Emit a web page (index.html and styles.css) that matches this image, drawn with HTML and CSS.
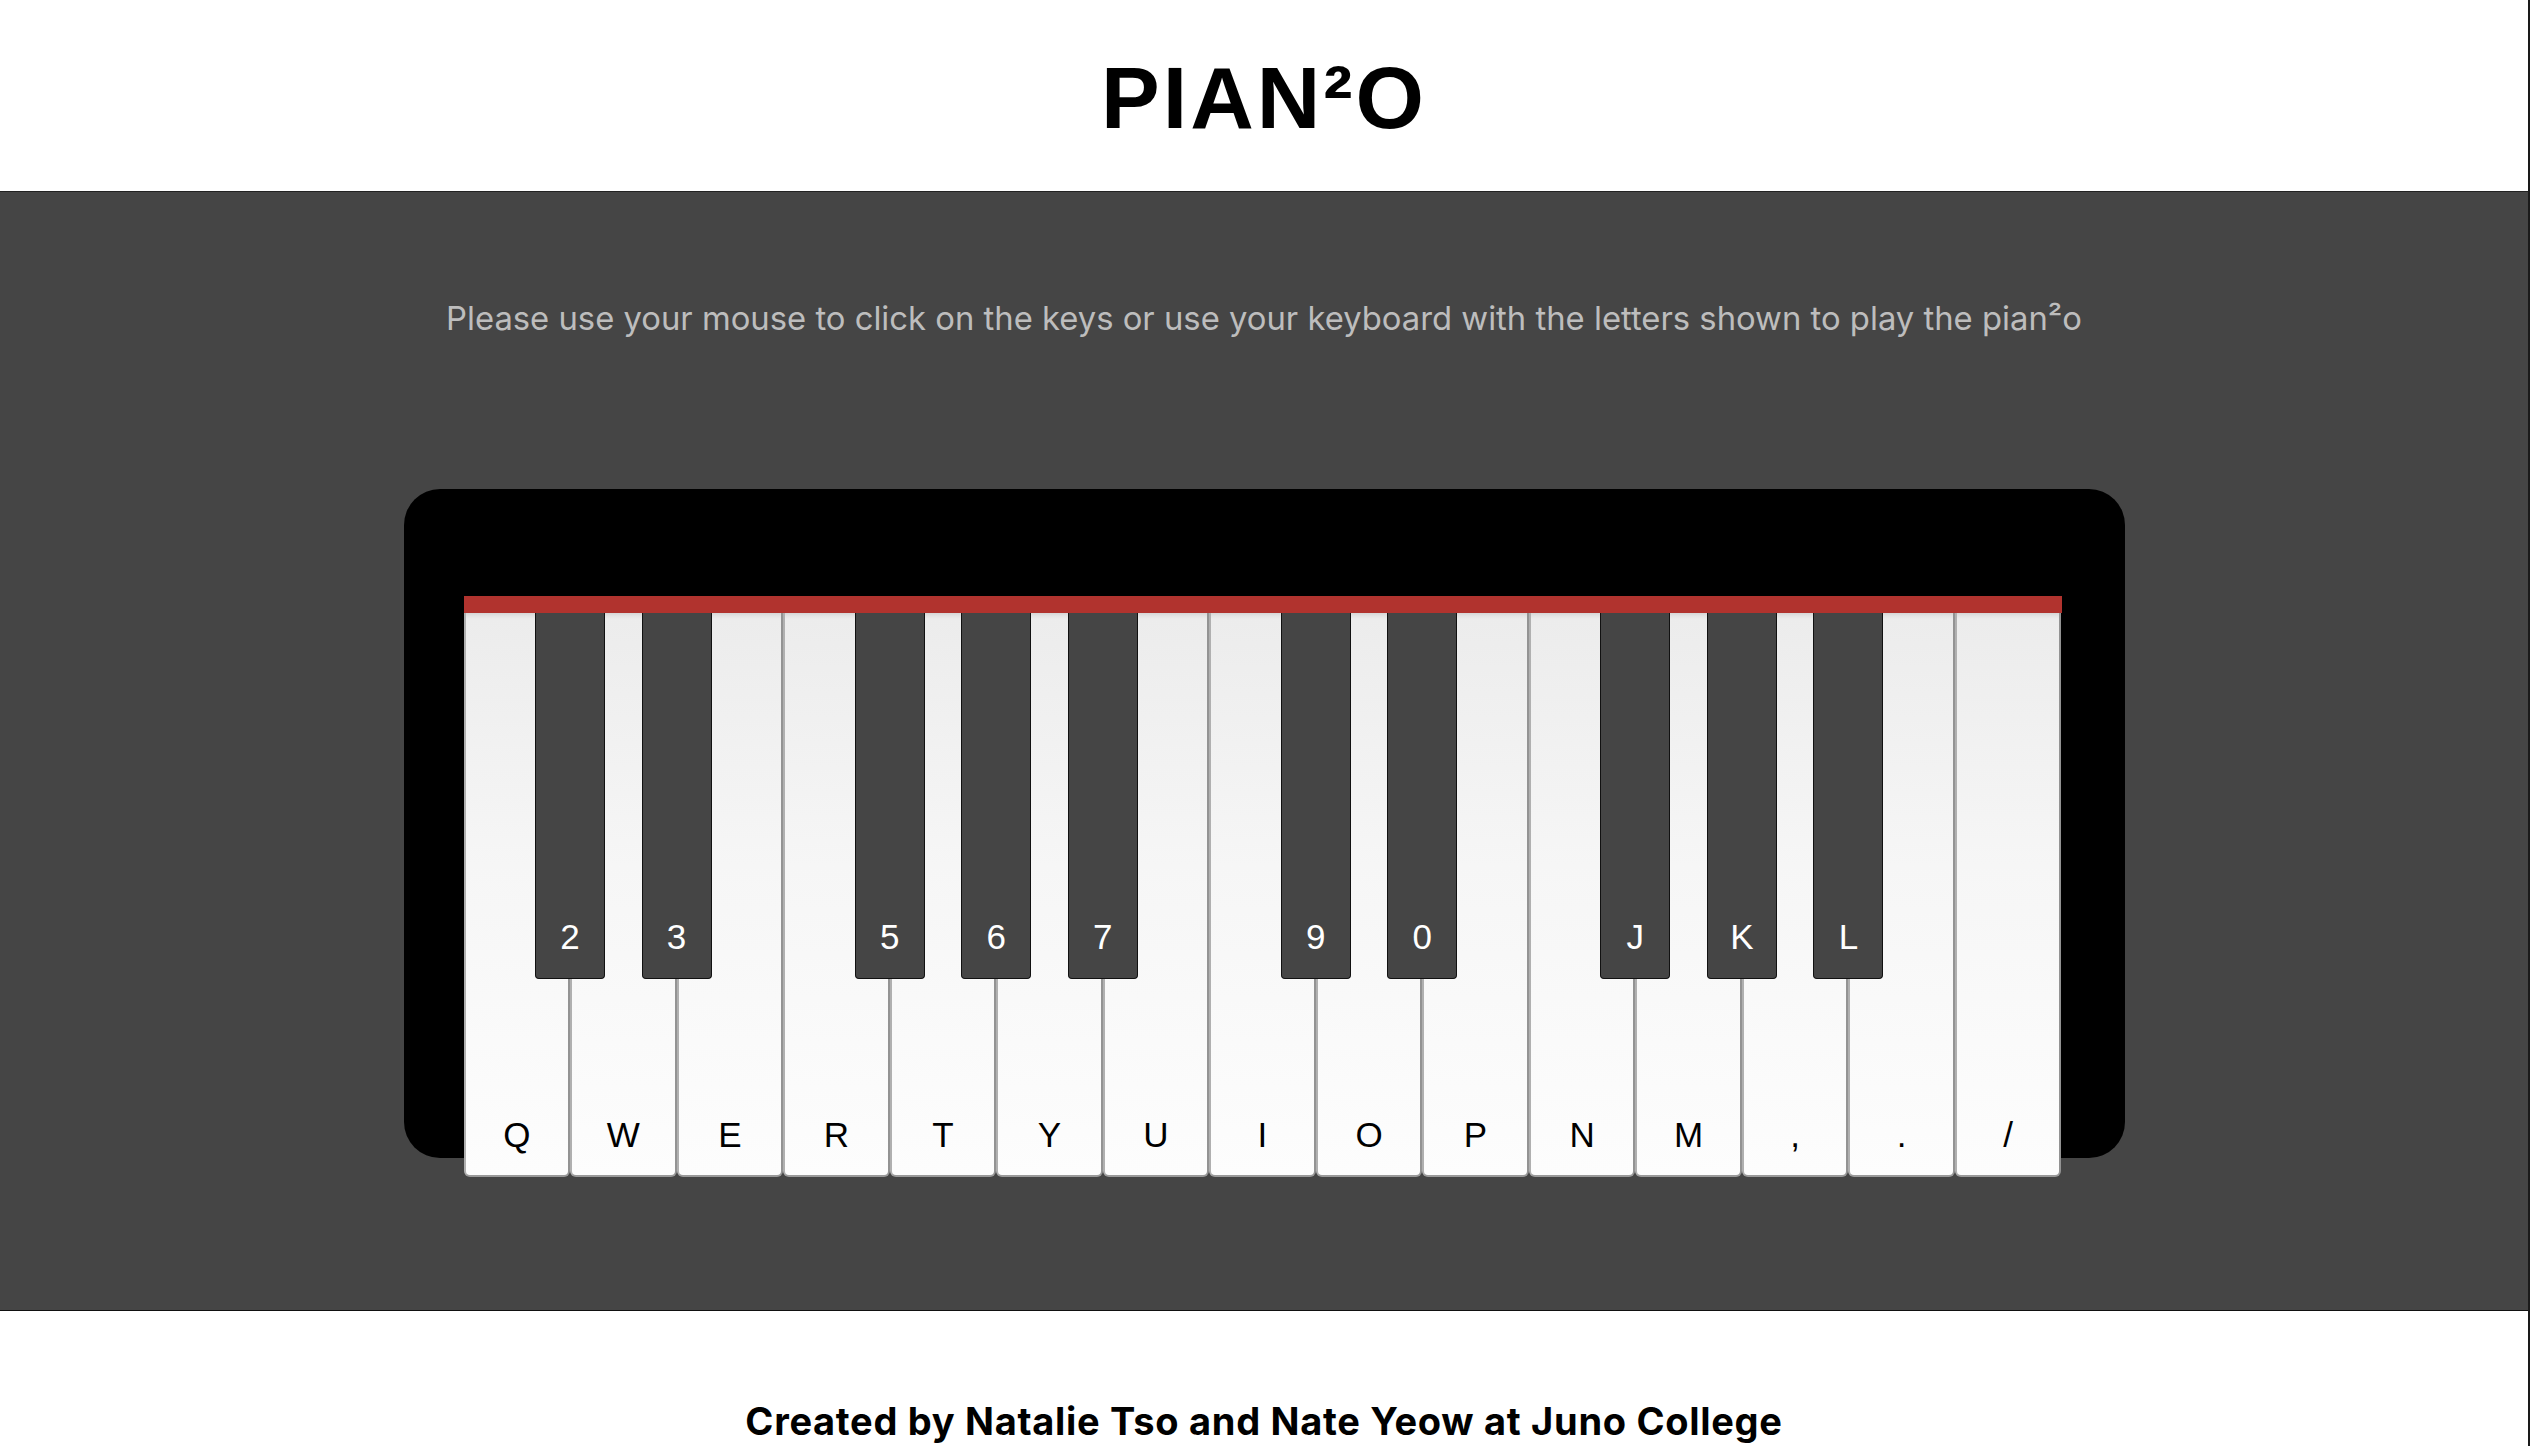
FILE: index.html
```html
<!DOCTYPE html>
<html lang="en">
<head>
<meta charset="utf-8">
<title>PIAN²O</title>
<link rel="stylesheet" href="styles.css">
</head>
<body>
<header class="site-header">
  <h1 class="logo">PIAN²O</h1>
</header>
<main class="stage">
  <p class="hint">Please use your mouse to click on the keys or use your keyboard with the letters shown to play the pian²o</p>
  <div class="piano">
    <div class="keyboard">
      <div class="rail"></div>
      <div class="keys">
        <div class="white"><span class="label">Q</span><div class="black"><span class="label">2</span></div></div>
        <div class="white"><span class="label">W</span><div class="black"><span class="label">3</span></div></div>
        <div class="white"><span class="label">E</span></div>
        <div class="white"><span class="label">R</span><div class="black"><span class="label">5</span></div></div>
        <div class="white"><span class="label">T</span><div class="black"><span class="label">6</span></div></div>
        <div class="white"><span class="label">Y</span><div class="black"><span class="label">7</span></div></div>
        <div class="white"><span class="label">U</span></div>
        <div class="white"><span class="label">I</span><div class="black"><span class="label">9</span></div></div>
        <div class="white"><span class="label">O</span><div class="black"><span class="label">0</span></div></div>
        <div class="white"><span class="label">P</span></div>
        <div class="white"><span class="label">N</span><div class="black"><span class="label">J</span></div></div>
        <div class="white"><span class="label">M</span><div class="black"><span class="label">K</span></div></div>
        <div class="white"><span class="label">,</span><div class="black"><span class="label">L</span></div></div>
        <div class="white"><span class="label">.</span></div>
        <div class="white"><span class="label">/</span></div>
      </div>
    </div>
  </div>
</main>
<footer class="site-footer">
  <p class="credit">Created by Natalie Tso and Nate Yeow at Juno College</p>
</footer>
</body>
</html>
```
FILE: styles.css
```css
html {
  overflow: hidden;
}
body {
  margin: 0;
  border-right: 2px solid #1a1a1a;
  font-family: Inter, "Liberation Sans", sans-serif;
  background: #fff;
}
.site-header {
  box-sizing: border-box;
  height: 192px;
  padding-top: 48px;
  border-bottom: 1px solid #222;
  text-align: center;
}
.logo {
  margin: 0;
  font-family: "Liberation Sans", Arial, sans-serif;
  font-weight: 700;
  font-size: 88px;
  line-height: 100px;
  letter-spacing: 3px;
  color: #000;
}
.stage {
  box-sizing: border-box;
  height: 1119px;
  padding-top: 106px;
  background: #454545;
  border-bottom: 1px solid #111;
}
.hint {
  margin: 0;
  text-align: center;
  font-size: 32.8px;
  line-height: 40px;
  color: #bdbdbd;
}
.piano {
  box-sizing: border-box;
  width: 1721px;
  height: 669px;
  margin: 151px auto 0;
  padding: 107px 63px 0 60px;
  background: #000;
  border-radius: 36px;
}
.keyboard {
  display: flex;
  flex-direction: column;
}
.rail {
  height: 17px;
  background: #b1332e;
}
.keys {
  display: flex;
  height: 564px;
}
.white {
  position: relative;
  flex: 1 1 0;
  box-sizing: border-box;
  display: flex;
  align-items: flex-end;
  justify-content: center;
  padding-bottom: 20px;
  border-left: 2px solid #b0b0b0;
  border-right: 2px solid #939393;
  border-bottom: 2px solid #9a9a9a;
  border-radius: 0 0 6px 6px;
  background: linear-gradient(#d6d6d6 0, #e4e4e4 3px, #ececec 6px, #f6f6f6 45%, #fdfdfd 100%);
}
.label {
  font-family: "Liberation Sans", Arial, sans-serif;
  font-size: 35px;
  line-height: 40px;
  color: #000;
}
.black {
  position: absolute;
  top: 0;
  left: calc(100% + 2px - 35px);
  z-index: 2;
  box-sizing: border-box;
  width: 70px;
  height: 366px;
  display: flex;
  align-items: flex-end;
  justify-content: center;
  padding-bottom: 21px;
  background: #454545;
  border: 1px solid #111;
  border-top: 0;
  border-radius: 0 0 4px 4px;
}
.black .label {
  color: #fff;
}
.site-footer {
  box-sizing: border-box;
  height: 135px;
  padding-top: 87px;
  text-align: center;
}
.credit {
  margin: 0;
  font-weight: 700;
  font-size: 38px;
  line-height: 46px;
  letter-spacing: 0.7px;
  color: #000;
}
```
